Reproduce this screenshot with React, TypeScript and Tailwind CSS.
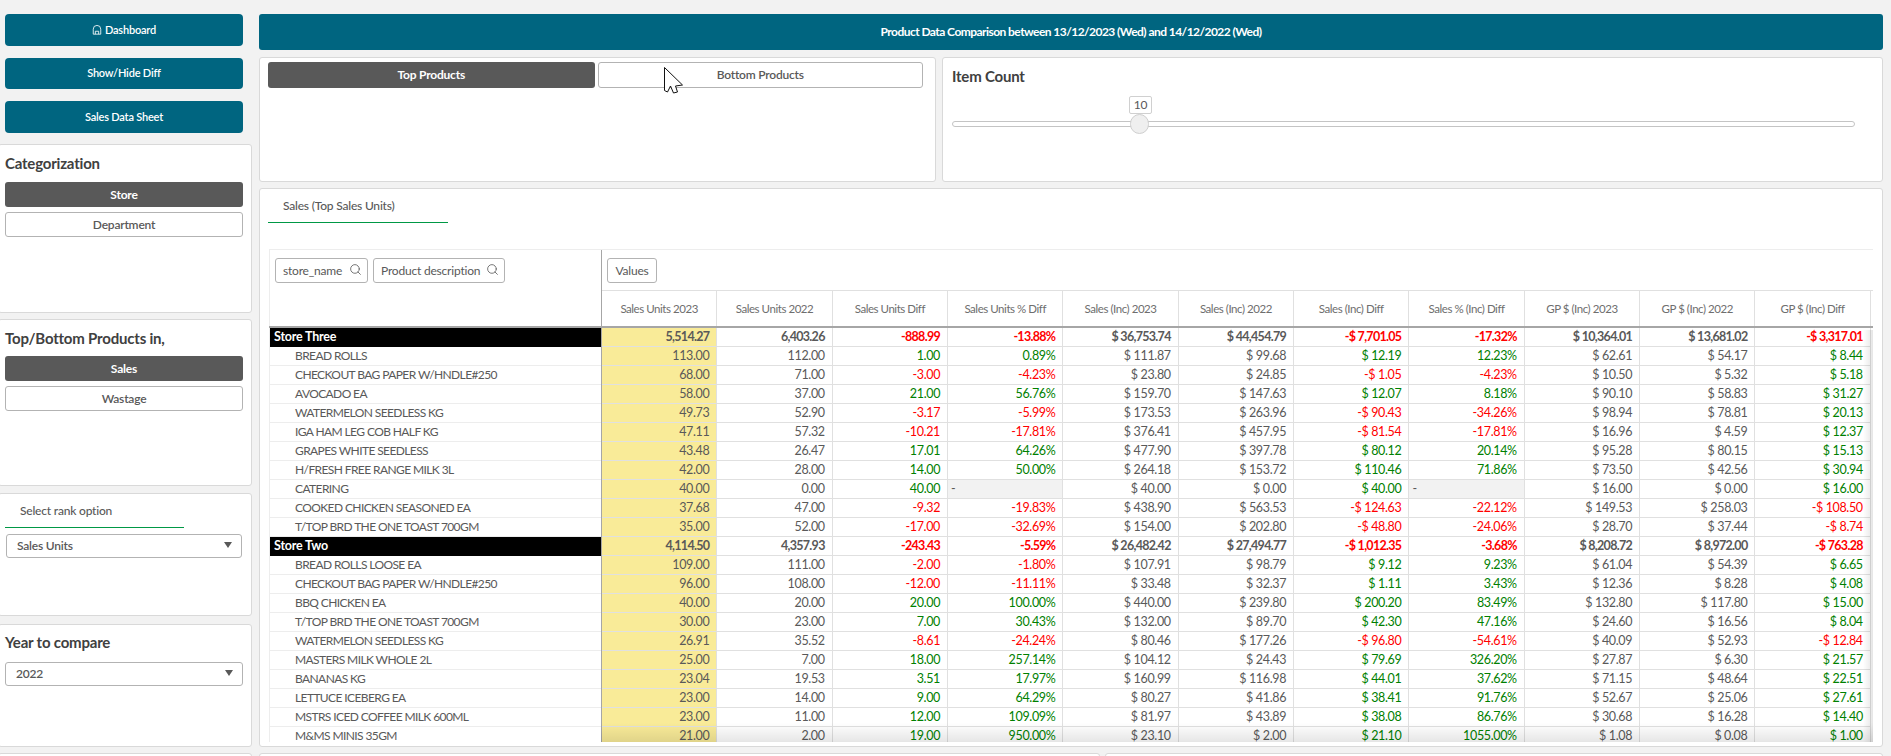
import React from "react";
import { Search } from "lucide-react";

const headers = [
  "Sales Units 2023",
  "Sales Units 2022",
  "Sales Units Diff",
  "Sales Units % Diff",
  "Sales (Inc) 2023",
  "Sales (Inc) 2022",
  "Sales (Inc) Diff",
  "Sales % (Inc) Diff",
  "GP $ (Inc) 2023",
  "GP $ (Inc) 2022",
  "GP $ (Inc) Diff",
];

const diffCols = [2, 3, 6, 7, 10];

const rows: { name: string; store?: boolean; vals: string[] }[] = [
  { name: "Store Three", store: true, vals: ["5,514.27", "6,403.26", "-888.99", "-13.88%", "$ 36,753.74", "$ 44,454.79", "-$ 7,701.05", "-17.32%", "$ 10,364.01", "$ 13,681.02", "-$ 3,317.01"] },
  { name: "BREAD ROLLS", vals: ["113.00", "112.00", "1.00", "0.89%", "$ 111.87", "$ 99.68", "$ 12.19", "12.23%", "$ 62.61", "$ 54.17", "$ 8.44"] },
  { name: "CHECKOUT BAG PAPER W/HNDLE#250", vals: ["68.00", "71.00", "-3.00", "-4.23%", "$ 23.80", "$ 24.85", "-$ 1.05", "-4.23%", "$ 10.50", "$ 5.32", "$ 5.18"] },
  { name: "AVOCADO EA", vals: ["58.00", "37.00", "21.00", "56.76%", "$ 159.70", "$ 147.63", "$ 12.07", "8.18%", "$ 90.10", "$ 58.83", "$ 31.27"] },
  { name: "WATERMELON SEEDLESS KG", vals: ["49.73", "52.90", "-3.17", "-5.99%", "$ 173.53", "$ 263.96", "-$ 90.43", "-34.26%", "$ 98.94", "$ 78.81", "$ 20.13"] },
  { name: "IGA HAM LEG COB HALF KG", vals: ["47.11", "57.32", "-10.21", "-17.81%", "$ 376.41", "$ 457.95", "-$ 81.54", "-17.81%", "$ 16.96", "$ 4.59", "$ 12.37"] },
  { name: "GRAPES WHITE SEEDLESS", vals: ["43.48", "26.47", "17.01", "64.26%", "$ 477.90", "$ 397.78", "$ 80.12", "20.14%", "$ 95.28", "$ 80.15", "$ 15.13"] },
  { name: "H/FRESH FREE RANGE MILK 3L", vals: ["42.00", "28.00", "14.00", "50.00%", "$ 264.18", "$ 153.72", "$ 110.46", "71.86%", "$ 73.50", "$ 42.56", "$ 30.94"] },
  { name: "CATERING", vals: ["40.00", "0.00", "40.00", "-", "$ 40.00", "$ 0.00", "$ 40.00", "-", "$ 16.00", "$ 0.00", "$ 16.00"] },
  { name: "COOKED CHICKEN SEASONED EA", vals: ["37.68", "47.00", "-9.32", "-19.83%", "$ 438.90", "$ 563.53", "-$ 124.63", "-22.12%", "$ 149.53", "$ 258.03", "-$ 108.50"] },
  { name: "T/TOP BRD THE ONE TOAST 700GM", vals: ["35.00", "52.00", "-17.00", "-32.69%", "$ 154.00", "$ 202.80", "-$ 48.80", "-24.06%", "$ 28.70", "$ 37.44", "-$ 8.74"] },
  { name: "Store Two", store: true, vals: ["4,114.50", "4,357.93", "-243.43", "-5.59%", "$ 26,482.42", "$ 27,494.77", "-$ 1,012.35", "-3.68%", "$ 8,208.72", "$ 8,972.00", "-$ 763.28"] },
  { name: "BREAD ROLLS LOOSE EA", vals: ["109.00", "111.00", "-2.00", "-1.80%", "$ 107.91", "$ 98.79", "$ 9.12", "9.23%", "$ 61.04", "$ 54.39", "$ 6.65"] },
  { name: "CHECKOUT BAG PAPER W/HNDLE#250", vals: ["96.00", "108.00", "-12.00", "-11.11%", "$ 33.48", "$ 32.37", "$ 1.11", "3.43%", "$ 12.36", "$ 8.28", "$ 4.08"] },
  { name: "BBQ CHICKEN EA", vals: ["40.00", "20.00", "20.00", "100.00%", "$ 440.00", "$ 239.80", "$ 200.20", "83.49%", "$ 132.80", "$ 117.80", "$ 15.00"] },
  { name: "T/TOP BRD THE ONE TOAST 700GM", vals: ["30.00", "23.00", "7.00", "30.43%", "$ 132.00", "$ 89.70", "$ 42.30", "47.16%", "$ 24.60", "$ 16.56", "$ 8.04"] },
  { name: "WATERMELON SEEDLESS KG", vals: ["26.91", "35.52", "-8.61", "-24.24%", "$ 80.46", "$ 177.26", "-$ 96.80", "-54.61%", "$ 40.09", "$ 52.93", "-$ 12.84"] },
  { name: "MASTERS MILK WHOLE 2L", vals: ["25.00", "7.00", "18.00", "257.14%", "$ 104.12", "$ 24.43", "$ 79.69", "326.20%", "$ 27.87", "$ 6.30", "$ 21.57"] },
  { name: "BANANAS KG", vals: ["23.04", "19.53", "3.51", "17.97%", "$ 160.99", "$ 116.98", "$ 44.01", "37.62%", "$ 71.15", "$ 48.64", "$ 22.51"] },
  { name: "LETTUCE ICEBERG EA", vals: ["23.00", "14.00", "9.00", "64.29%", "$ 80.27", "$ 41.86", "$ 38.41", "91.76%", "$ 52.67", "$ 25.06", "$ 27.61"] },
  { name: "MSTRS ICED COFFEE MILK 600ML", vals: ["23.00", "11.00", "12.00", "109.09%", "$ 81.97", "$ 43.89", "$ 38.08", "86.76%", "$ 30.68", "$ 16.28", "$ 14.40"] },
  { name: "M&MS MINIS 35GM", vals: ["21.00", "2.00", "19.00", "950.00%", "$ 23.10", "$ 2.00", "$ 21.10", "1055.00%", "$ 1.08", "$ 0.08", "$ 1.00"] },
];

const TealButton = ({ children, className }: { children: React.ReactNode; className: string }) => (
  <div className={`flex shrink-0 items-center justify-center gap-[3px] rounded-[4px] bg-[#006580] text-[11px] font-semibold text-white ${className}`}>
    {children}
  </div>
);

const Toggle = ({ label, active, className = "" }: { label: string; active?: boolean; className?: string }) => (
  <div
    className={`flex items-center justify-center rounded-[3px] text-[12px] ${
      active ? "bg-[#595959] font-bold text-white" : "border border-[#b3b3b3] bg-white font-semibold text-[#595959]"
    } ${className}`}
  >
    {label}
  </div>
);

const Panel = ({ children, className }: { children?: React.ReactNode; className: string }) => (
  <div className={`shrink-0 rounded-[3px] border border-[#d9d9d9] bg-white ${className}`}>{children}</div>
);

const SelectBox = ({ label, className }: { label: string; className: string }) => (
  <div className={`flex items-center justify-between rounded-[3px] border border-[#b3b3b3] bg-white text-[12px] font-semibold text-[#595959] ${className}`}>
    <span>{label}</span>
    <span className="mr-[9px] mb-[3px] h-0 w-0 border-x-[4px] border-t-[6px] border-x-transparent border-t-[#595959]" />
  </div>
);

const SearchPill = ({ label, className }: { label: string; className: string }) => (
  <div className={`flex h-[25px] items-center justify-between rounded-[3px] border border-[#b3b3b3] bg-white pl-[7px] pr-[5px] text-[12px] text-[#595959] ${className}`}>
    <span>{label}</span>
    <Search className="mb-[3px] h-[13px] w-[13px]" strokeWidth={1.5} />
  </div>
);

const cellColor = (v: string, col: number) => {
  if (!diffCols.includes(col) || v === "-") return "text-[#595959]";
  return v.startsWith("-") ? "text-[#ff0000]" : "text-[#008000]";
};

const App = () => {
  return (
    <div className="flex h-[756px] w-[1891px] overflow-hidden bg-[#f2f2f2] pt-[14px] font-['Lato','Noto_Sans',sans-serif] tracking-[-0.2px] text-[#595959]">
      {/* left column */}
      <div className="ml-[-2px] flex w-[254px] shrink-0 flex-col">
        <div className="ml-[7px] mr-[9px] flex shrink-0 flex-col">
          <TealButton className="h-[32px]">
            <svg viewBox="0 0 12 12" className="h-[10px] w-[10px]" fill="none" stroke="currentColor" strokeWidth="1">
              <path d="M1.5 11V5a4.5 4.5 0 0 1 9 0v6z" />
              <path d="M4 11V7.5h4V11" />
            </svg>
            Dashboard
          </TealButton>
          <TealButton className="mt-[12px] h-[31px]">Show/Hide Diff</TealButton>
          <TealButton className="mt-[12px] h-[32px]">Sales Data Sheet</TealButton>
        </div>

        <Panel className="mt-[11px] h-[169px] pl-[6px] pr-[8px] pt-[7px]">
          <div className="text-[15px] font-bold leading-[22px] text-[#404040]">Categorization</div>
          <Toggle label="Store" active className="mt-[8px] h-[25px]" />
          <Toggle label="Department" className="mt-[5px] h-[25px]" />
        </Panel>
        <Panel className="mt-[6px] h-[167px] pl-[6px] pr-[8px] pt-[7px]">
          <div className="text-[15px] font-bold leading-[22px] text-[#404040]">Top/Bottom Products in,</div>
          <Toggle label="Sales" active className="mt-[7px] h-[25px]" />
          <Toggle label="Wastage" className="mt-[5px] h-[25px]" />
        </Panel>
        <Panel className="mt-[7px] h-[123px] pl-[6px] pr-[8px]">
          <div className="w-[179px] border-b border-[#009845] pb-[8px] pl-[15px] pt-[9px] text-[12px] font-medium leading-[16px]">
            Select rank option
          </div>
          <SelectBox label="Sales Units" className="ml-[1px] mr-[1px] mt-[6px] h-[24px] pl-[10px]" />
        </Panel>
        <Panel className="mt-[8px] h-[123px] pl-[6px] pr-[8px] pt-[6px]">
          <div className="text-[15px] font-bold leading-[22px] text-[#404040]">Year to compare</div>
          <SelectBox label="2022" className="mt-[9px] h-[24px] pl-[10px]" />
        </Panel>
        <Panel className="mt-[6px] h-[20px]" />
      </div>

      {/* right column */}
      <div className="ml-[7px] flex w-[1624px] shrink-0 flex-col">
        <div className="flex h-[36px] shrink-0 items-center justify-center rounded-[3px] bg-[#006580] text-[12px] font-bold tracking-[-0.55px] text-white">
          Product Data Comparison between 13/12/2023 (Wed) and 14/12/2022 (Wed)
        </div>

        <div className="mt-[7px] flex h-[125px] shrink-0 gap-[6px]">
          <Panel className="relative flex w-[677px] gap-[3px] pl-[8px] pr-[12px] pt-[4px]">
            <Toggle label="Top Products" active className="h-[26px] w-[327px]" />
            <Toggle label="Bottom Products" className="h-[26px] w-[326px]" />
            <svg viewBox="0 0 19 27" className="absolute left-[404px] top-[9px] h-[27px] w-[19px]">
              <path d="M.5.5v23l3 1.5 3-6 3 7 4-1-2-6 7-1z" fill="#fff" stroke="#111" strokeWidth="1" />
            </svg>
          </Panel>
          <Panel className="flex-1 shrink pl-[9px] pr-[27px] pt-[7px]">
            <div className="text-[15px] font-bold leading-[22px] text-[#404040]">Item Count</div>
            <div className="relative mt-[34px] h-[6px] rounded-full border border-[#c4c4c4] bg-white">
              <div className="absolute left-[176px] top-[-26px] flex h-[18px] w-[23px] items-center justify-center rounded-[2px] border border-[#d0d0d0] bg-white text-[12px] text-[#595959]">
                10
              </div>
              <div className="absolute left-[177px] top-[-8px] h-[20px] w-[19px] rounded-full border border-[#cfcfcf] bg-[#efefef]" />
            </div>
          </Panel>
        </div>

        <Panel className="mt-[6px] h-[559px] px-[8px]">
          <div className="w-[180px] border-b border-[#009845] pb-[8px] pl-[15px] pt-[9px] text-[12px] font-medium leading-[16px]">
            Sales (Top Sales Units)
          </div>

          <div className="relative ml-[1px] mt-[26px] h-[493px] w-[1604px] overflow-hidden border-t border-[#ededed] text-[12.5px]">
            {/* pivot header */}
            <div className="flex h-[78px] border-b-2 border-[#a6a6a6]">
              <div className="flex w-[332px] shrink-0 gap-[5px] border-l border-[#ededed] pl-[5px] pt-[8px]">
                <SearchPill label="store_name" className="w-[93px]" />
                <SearchPill label="Product description" className="w-[132px]" />
              </div>
              <div className="flex-1 border-l border-[#a6a6a6]">
                <div className="h-[41px] border-b border-[#e0e0e0] pl-[5px] pt-[8px]">
                  <div className="flex h-[25px] w-[50px] items-center justify-center rounded-[3px] border border-[#b3b3b3] text-[12px]">Values</div>
                </div>
                <div className="flex h-[35px]">
                  {headers.map((h) => (
                    <div
                      key={h}
                      className="flex w-[115.35px] shrink-0 items-center justify-center border-r border-[#e0e0e0] text-[11.5px] tracking-[-0.45px] text-[#6e6e6e]"
                    >
                      {h}
                    </div>
                  ))}
                </div>
              </div>
            </div>

            {/* pivot rows */}
            {rows.map((row, i) => (
              <div key={`${row.name}-${i}`} className="flex h-[19px] leading-[18px]">
                <div
                  className={`w-[332px] shrink-0 border-l border-[#ededed] ${
                    row.store ? "bg-black pl-[4px] font-bold text-white" : "border-b border-[#e0e0e0] pl-[25px] text-[12px] tracking-[-0.6px]"
                  }`}
                >
                  {row.name}
                </div>
                <div className="flex flex-1 border-l border-[#a6a6a6]">
                  {row.vals.map((v, c) => (
                    <div
                      key={c}
                      className={`w-[115.35px] shrink-0 border-b border-r border-[#e0e0e0] ${
                        v === "-" ? "bg-[#f2f2f2] pl-[3px] text-left" : "pr-[7px] text-right"
                      } ${c === 0 ? "bg-[#f9eb98]" : ""} ${row.store ? "font-bold tracking-[-0.7px]" : "tracking-[-0.35px]"} ${cellColor(v, c)}`}
                    >
                      {v}
                    </div>
                  ))}
                </div>
              </div>
            ))}

            {/* scroll fades */}
            <div className="absolute bottom-0 left-[332px] right-0 h-[19px] bg-gradient-to-b from-transparent to-black/10" />
            <div className="absolute bottom-0 right-0 top-[80px] w-[10px] bg-gradient-to-r from-transparent to-black/10" />
          </div>
        </Panel>

        <div className="mt-[6px] flex shrink-0 gap-[5px]">
          <Panel className="h-[20px] w-[841px]" />
          <Panel className="h-[20px] flex-1 shrink" />
        </div>
      </div>
    </div>
  );
};

export default App;
